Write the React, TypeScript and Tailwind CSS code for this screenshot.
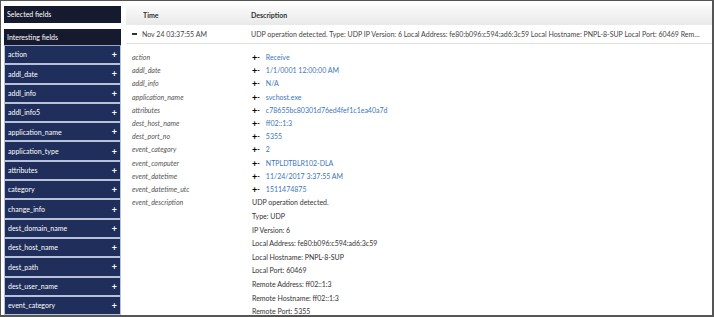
import React from "react";

const fields = [
  "action",
  "addl_date",
  "addl_info",
  "addl_info5",
  "application_name",
  "application_type",
  "attributes",
  "category",
  "change_info",
  "dest_domain_name",
  "dest_host_name",
  "dest_path",
  "dest_user_name",
  "event_category",
  "event_computer",
];

const details: [string, string][] = [
  ["action", "Receive"],
  ["addl_date", "1/1/0001 12:00:00 AM"],
  ["addl_info", "N/A"],
  ["application_name", "svchost.exe"],
  ["attributes", "c78655bc80301d76ed4fef1c1ea40a7d"],
  ["dest_host_name", "ff02::1:3"],
  ["dest_port_no", "5355"],
  ["event_category", "2"],
  ["event_computer", "NTPLDTBLR102-DLA"],
  ["event_datetime", "11/24/2017 3:37:55 AM"],
  ["event_datetime_utc", "1511474875"],
];

const descLines = [
  "UDP operation detected.",
  "Type: UDP",
  "IP Version: 6",
  "Local Address: fe80:b096:c594:ad6:3c59",
  "Local Hostname: PNPL-8-SUP",
  "Local Port: 60469",
  "Remote Address: ff02::1:3",
  "Remote Hostname: ff02::1:3",
  "Remote Port: 5355",
];

export default function App() {
  return (
    <div
      className="w-[714px] h-[317px] overflow-hidden bg-white border border-[#555] border-r-2 border-b-2 flex"
      style={{ fontFamily: "Lato, 'Open Sans', sans-serif" }}
    >
      {/* Sidebar */}
      <div className="w-[117px] ml-[3px] mt-[5px] flex flex-col shrink-0 overflow-hidden">
        <div className="h-[17px] shrink-0 bg-[#161a2e] text-white text-[7px] flex items-center pl-[3px]">
          Selected fields
        </div>
        <div className="h-[6px] shrink-0" />
        <div className="h-[17px] shrink-0 bg-[#161a2e] text-white text-[7px] flex items-center pl-[3px] border-b border-[#9aa6c4]">
          Interesting fields
        </div>
        <div className="flex flex-col shrink-0 bg-[#b7c1da] px-[1px]">
          {fields.map((f) => (
            <div
              key={f}
              className="h-[17.3px] mb-[2px] bg-[#1f2e5a] text-white text-[7px] flex items-center justify-between pl-[3px] pr-[3px] shrink-0"
            >
              <span>{f}</span>
              <span className="font-bold text-[9px] leading-none">+</span>
            </div>
          ))}
        </div>
      </div>

      {/* Main */}
      <div className="flex-1 ml-[5px] mt-[4px] flex flex-col min-w-0">
        <div className="h-[20px] shrink-0 grid grid-cols-[125px_1fr] items-center bg-gradient-to-b from-[#fbfbfb] to-[#e9e9e9] text-[7px] font-bold text-[#333] leading-none">
          <span className="pl-[17px]">Time</span>
          <span>Description</span>
        </div>
        <div className="h-[19px] shrink-0 grid grid-cols-[125px_1fr] items-center border-b border-[#e0e0e0] text-[7px] text-[#444] leading-none">
          <span className="pl-[6px] flex items-center">
            <span className="inline-block w-[5px] h-[1.5px] bg-[#333] mr-[5px]" />
            Nov 24 03:37:55 AM
          </span>
          <span className="truncate pr-[10px] leading-normal">
            UDP operation detected. Type: UDP IP Version: 6 Local Address: fe80:b096:c594:ad6:3c59 Local Hostname: PNPL-8-SUP Local Port: 60469 Remote Address: ff02::1:3 Remote Hostname: ff02::1:3 Remote Port: 5355
          </span>
        </div>
        <div className="mt-[7px] grid grid-cols-[126px_1fr] text-[7px] leading-none">
          {details.map(([k, v]) => (
            <React.Fragment key={k}>
              <div className="h-[13.2px] flex items-center pl-[6px] italic text-[#555]">{k}</div>
              <div className="h-[13.2px] flex items-center">
                <span className="font-bold text-black text-[9px] leading-none">+</span>
                <span className="font-bold text-black leading-none mr-[6px]">-</span>
                <span className="text-[#3b76bd]">{v}</span>
              </div>
            </React.Fragment>
          ))}
          <div className="h-[13.2px] flex items-center pl-[6px] italic text-[#555]">event_description</div>
          <div className="flex flex-col text-[#333]">
            {descLines.map((l) => (
              <div key={l} className="h-[13.6px] shrink-0 flex items-center">
                {l}
              </div>
            ))}
          </div>
        </div>
      </div>
    </div>
  );
}
